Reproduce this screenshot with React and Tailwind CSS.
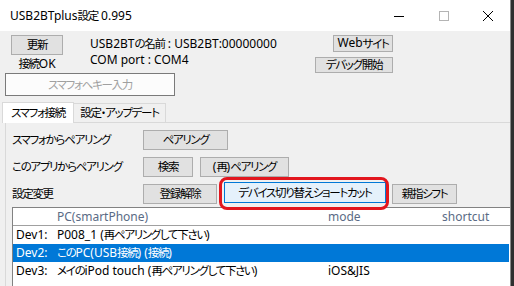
import React from "react";

const font = {
  fontFamily: '"Noto Sans", "Noto Sans CJK JP", sans-serif',
};

// split a string so that the Japanese runs get the narrower UI-font look
const jpRun = /([\u3000-\u30ff\u4e00-\u9fff\uff00-\uffef]+)/;

const T = ({ children }) => {
  if (typeof children !== "string") return children;
  return children.split(jpRun).map((part, i) =>
    i % 2 === 1 ? (
      <span key={i} className="text-[11.5px] tracking-[-1.3px]">
        {part}
      </span>
    ) : (
      <span key={i}>{part}</span>
    )
  );
};

const Btn = ({ className = "", children }) => (
  <div
    className={`flex items-center justify-center whitespace-nowrap border border-[#adadad] bg-[#e1e1e1] text-[12px] leading-none text-black ${className}`}
  >
    <T>{children}</T>
  </div>
);

const devices = [
  { id: "Dev1:", name: "P008_1 (再ペアリングして下さい)", mode: "", shortcut: "" },
  { id: "Dev2:", name: "このPC(USB接続) (接続)", mode: "", shortcut: "", selected: true },
  { id: "Dev3:", name: "メイのiPod touch (再ペアリングして下さい)", mode: "iOS&JIS", shortcut: "" },
];

export default function App() {
  return (
    <div
      className="flex h-[286px] w-[514px] overflow-hidden bg-[#2f2f2f] text-black [font-feature-settings:'palt']"
      style={font}
    >
      <div className="flex h-full w-[511px] flex-col overflow-hidden border-r border-[#8a8a8a] bg-[#f0f0f0]">
        {/* title bar */}
        <div className="flex h-[31px] shrink-0 items-center bg-white">
          <span className="ml-[10px] whitespace-nowrap text-[12px] leading-none">
            <T>USB2BTplus設定 0.995</T>
          </span>
          <div className="ml-auto flex items-center">
            <svg width="12" height="12" viewBox="0 0 12 12" className="mr-[33px]">
              <line x1="1" y1="6.5" x2="11" y2="6.5" stroke="#000" strokeWidth="1" />
            </svg>
            <svg width="12" height="12" viewBox="0 0 12 12" className="mr-[32px]">
              <rect x="1.5" y="1.5" width="9" height="9" fill="none" stroke="#b4b4b4" strokeWidth="1" />
            </svg>
            <svg width="12" height="12" viewBox="0 0 12 12" className="mr-[16px]">
              <path d="M1 1 L11 11 M11 1 L1 11" stroke="#000" strokeWidth="1" fill="none" />
            </svg>
          </div>
        </div>

        {/* top section */}
        <div className="flex h-[42px] shrink-0 pt-[4px]">
          <div className="ml-[11px] flex w-[52px] flex-col items-center">
            <Btn className="h-[20px] w-[52px]">更新</Btn>
            <span className="mt-[3px] whitespace-nowrap text-[12px] leading-[12px]">
              <T>接続OK</T>
            </span>
          </div>
          <div className="ml-[27px] mt-[1px] whitespace-nowrap text-[12px] leading-[16px]">
            <div>
              <T>USB2BTの名前 : USB2BT:00000000</T>
            </div>
            <div>COM port : COM4</div>
          </div>
          <div className="ml-auto mr-[117px] flex flex-col items-end gap-[5px]">
            <Btn className="h-[18px] w-[60px]">Webサイト</Btn>
            <Btn className="h-[18px] w-[78px]">デバッグ開始</Btn>
          </div>
        </div>

        <div className="ml-[5px] flex h-[23px] w-[170px] shrink-0 items-center justify-center border border-[#7a7a7a] bg-[#fcfcfc] text-[12px] text-[#a0a0a0]">
          <T>スマフォへキー入力</T>
        </div>

        {/* tabs */}
        <div className="mt-[6px] flex h-[20px] shrink-0 items-end pl-[2px]">
          <div className="relative z-10 -mb-px flex h-[21px] w-[72px] items-center justify-center whitespace-nowrap border border-b-0 border-[#d9d9d9] bg-white text-[12px]">
            <T>スマフォ接続</T>
          </div>
          <div className="flex h-[19px] w-[92px] items-center justify-center whitespace-nowrap border border-b-0 border-l-0 border-[#d9d9d9] bg-[#f0f0f0] text-[12px]">
            <T>設定・アップデート</T>
          </div>
        </div>

        <div className="ml-[5px] w-[510px] flex-1 border-l border-t border-[#d9d9d9] bg-[#f0f0f0] pt-[7px]">
          <div className="flex items-center pl-[6px]">
            <span className="w-[131px] whitespace-nowrap text-[12px]">
              <T>スマフォからペアリング</T>
            </span>
            <Btn className="h-[20px] w-[85px]">ペアリング</Btn>
          </div>
          <div className="mt-[7px] flex items-center pl-[6px]">
            <span className="w-[131px] whitespace-nowrap text-[12px]">
              <T>このアプリからペアリング</T>
            </span>
            <Btn className="h-[20px] w-[50px]">検索</Btn>
            <Btn className="ml-[7px] h-[20px] w-[89px]">(再)ペアリング</Btn>
          </div>
          <div className="mt-[6px] flex items-center pl-[6px]">
            <span className="w-[131px] whitespace-nowrap text-[12px]">
              <T>設定変更</T>
            </span>
            <Btn className="h-[20px] w-[74px]">登録解除</Btn>
            <div className="relative ml-[7px]">
              <div className="flex h-[21px] w-[162px] -translate-y-px items-center justify-center whitespace-nowrap border border-[#0078d7] bg-[#e5f1fb] text-[12px] leading-none">
                <T>デバイス切り替えショートカット</T>
              </div>
              <div className="pointer-events-none absolute -bottom-[6px] -left-[5px] -right-[3px] -top-[6px] rounded-[8px] border-[3px] border-[#e2161e]" />
            </div>
            <Btn className="ml-[6px] h-[20px] w-[65px]">親指シフト</Btn>
          </div>

          {/* device list */}
          <div className="ml-[6px] mt-[3px] h-[100px] w-[499px] border border-[#828282] bg-white text-[12px]">
            <div className="grid h-[18px] grid-cols-[41px_271px_114px_1fr] items-center border-b border-[#a0a0a0] pl-[3px] text-[#5a6b85]">
              <span />
              <span>PC(smartPhone)</span>
              <span>mode</span>
              <span>shortcut</span>
            </div>
            {devices.map((d) => (
              <div
                key={d.id}
                className={`grid h-[18px] grid-cols-[41px_271px_114px_1fr] items-center pl-[3px] ${
                  d.selected ? "mr-[1px] bg-[#0078d7] text-white" : "text-black"
                }`}
              >
                <span>{d.id}</span>
                <span className="whitespace-nowrap">
                  <T>{d.name}</T>
                </span>
                <span>{d.mode}</span>
                <span>{d.shortcut}</span>
              </div>
            ))}
          </div>
        </div>
      </div>
    </div>
  );
}
